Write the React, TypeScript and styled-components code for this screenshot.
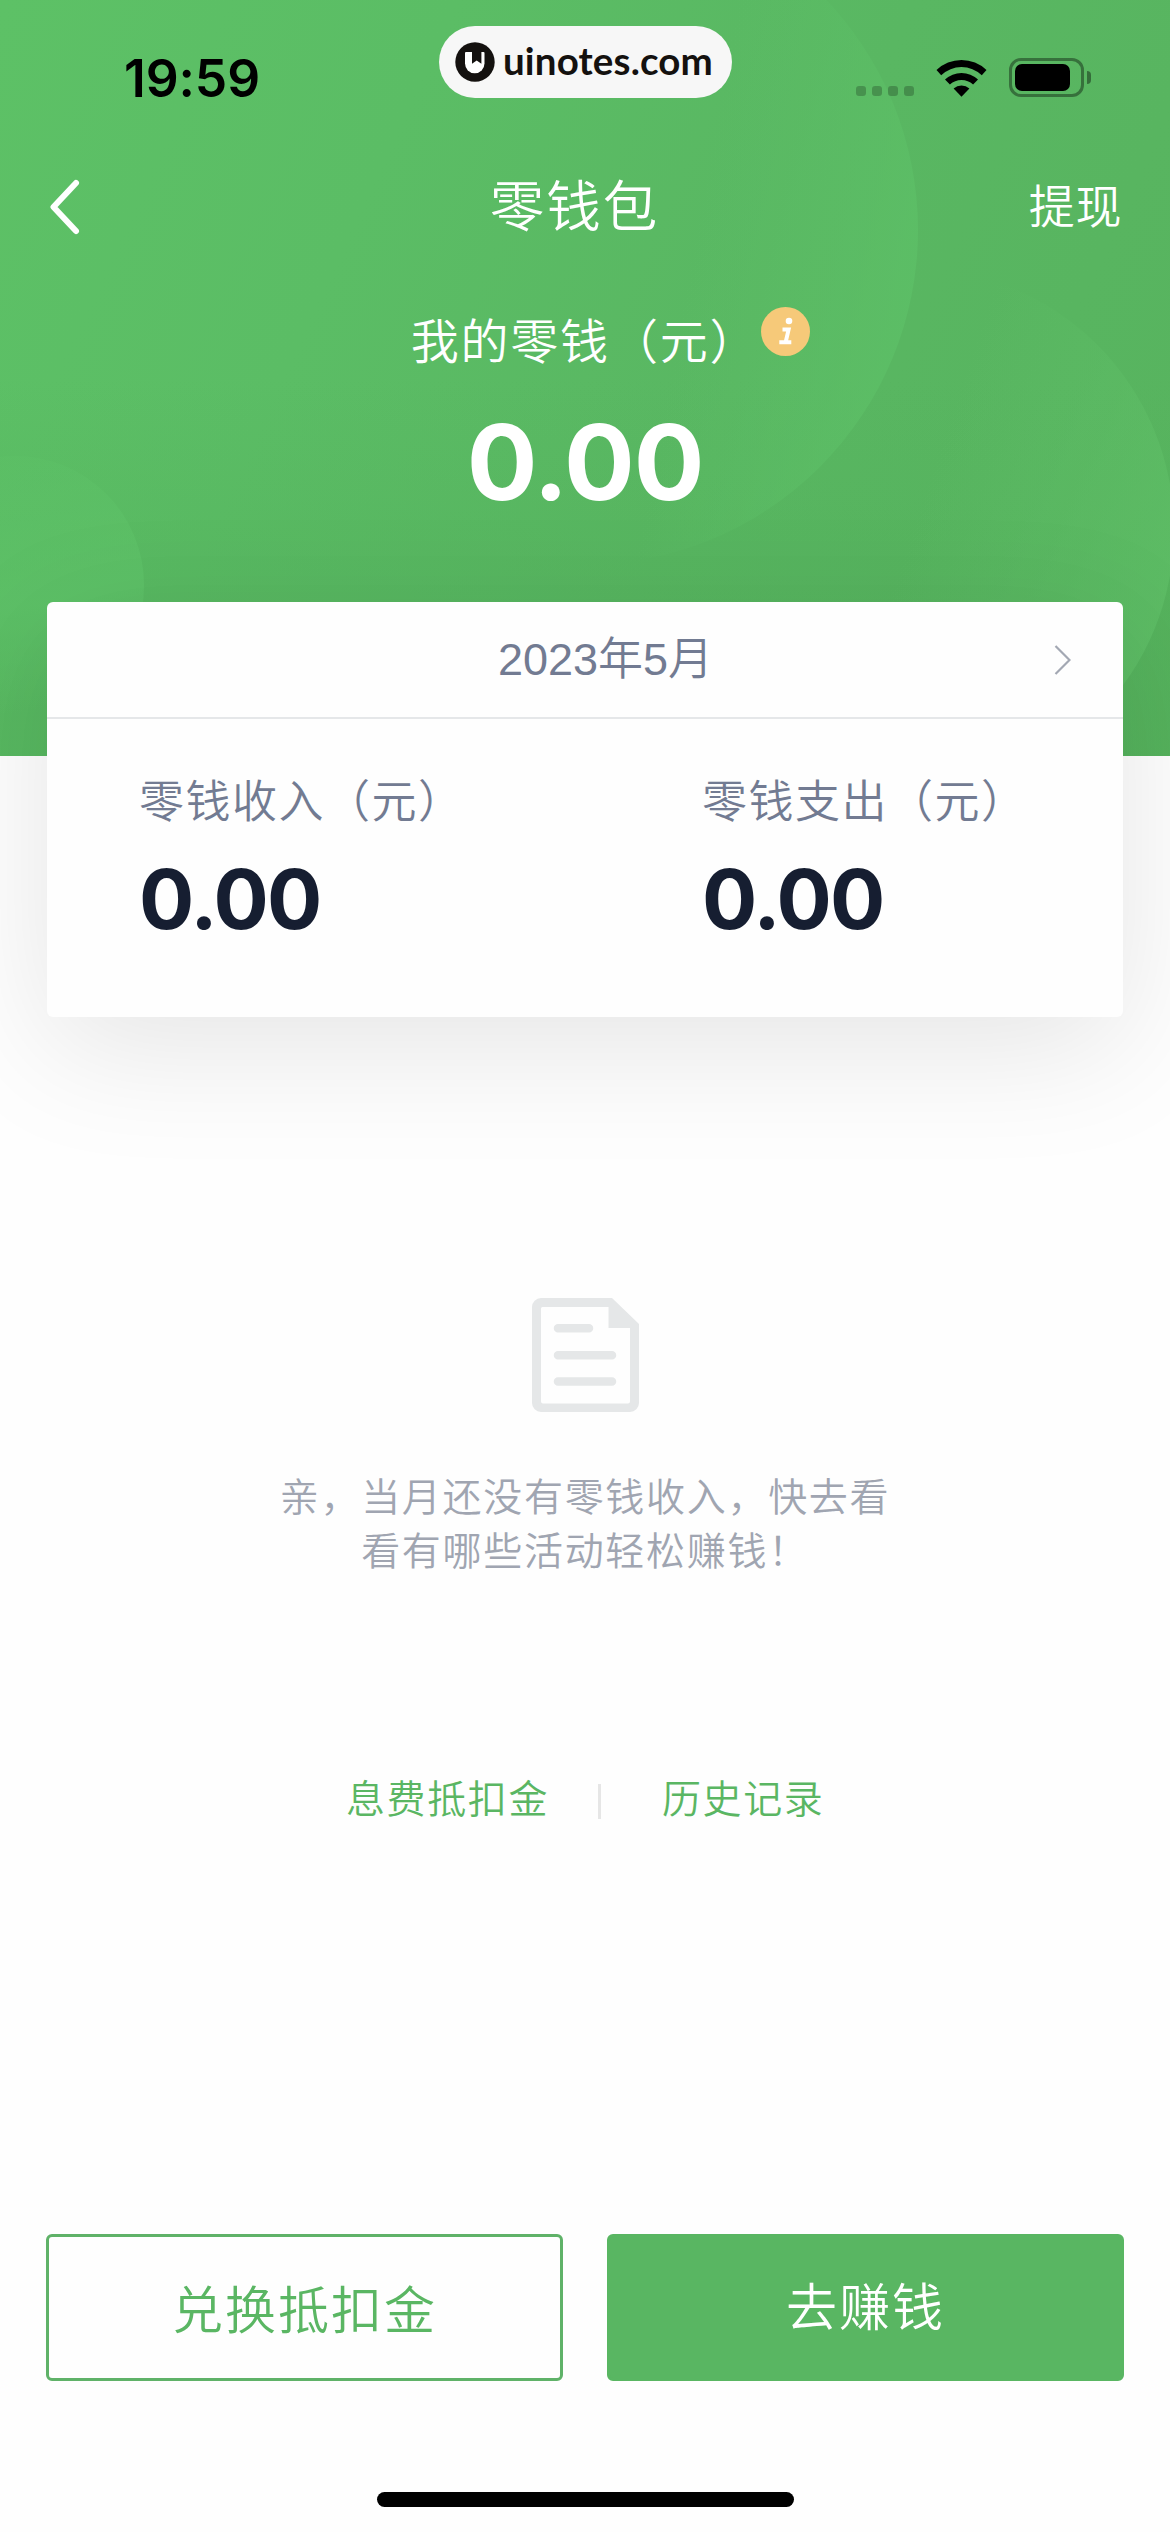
import React from "react";
import styled, { createGlobalStyle } from "styled-components";

const CJK = `"Noto Sans CJK SC", "Noto Sans", sans-serif`;
const GREEN = "#5ab663";

const GlobalStyle = createGlobalStyle`
  * { box-sizing: border-box; }
  body { margin: 0; background: #fefefe; }
`;

const Screen = styled.div`
  width: 1170px;
  height: 2532px;
  display: flex;
  flex-direction: column;
  background: #fefefe;
  font-family: ${CJK};
  font-weight: 350;
  overflow: hidden;
`;

const Hero = styled.header`
  position: relative;
  flex: none;
  height: 756px;
  display: flex;
  flex-direction: column;
  color: #fff;
  background: linear-gradient(115deg, #5dc166 0%, #5bbd65 30%, #59b762 60%, #57b35e 100%);
`;

const Backdrop = styled.svg`
  position: absolute;
  inset: 0;
`;

const StatusBar = styled.div`
  position: relative;
  height: 132px;
  display: grid;
  grid-template-columns: 439px 293px 1fr;
  align-items: start;
  padding-top: 26px;
`;

const Clock = styled.time`
  padding: 22px 0 0 124px;
  font: 600 51.5px/60px Inter, sans-serif;
  letter-spacing: -0.1px;
  color: #000;
`;

const Watermark = styled.div`
  height: 72px;
  display: flex;
  align-items: center;
  gap: 8px;
  padding-left: 16px;
  border-radius: 36px;
  background: #f7f7f7;
  color: #14110f;
`;

const Wordmark = styled.span`
  padding-bottom: 3px;
  font: 700 38.5px/57px Lato, sans-serif;
  letter-spacing: 0.15px;
`;

const StatusIcons = styled.div`
  display: flex;
  align-items: center;
  padding: 32px 0 0 124px;
`;

const SignalDots = styled.div`
  display: flex;
  gap: 6px;
  margin: 26px 22px 0 0;
`;

const Dot = styled.i`
  width: 10px;
  height: 10px;
  border-radius: 3px;
  background: rgba(0, 0, 0, 0.22);
`;

const Battery = styled.div`
  width: 75px;
  height: 39px;
  margin-left: 22px;
  padding: 3px;
  border: 3px solid rgba(0, 0, 0, 0.38);
  border-radius: 12px;
`;

const Charge = styled.div`
  width: 55px;
  height: 27px;
  border-radius: 7px;
  background: #000;
`;

const BatteryNub = styled.div`
  width: 4px;
  height: 13px;
  margin-left: 3px;
  border-radius: 0 4px 4px 0;
  background: rgba(0, 0, 0, 0.4);
`;

const NavBar = styled.nav`
  position: relative;
  height: 148px;
  display: flex;
  align-items: center;
  padding: 0 47px;
`;

const BackButton = styled.button`
  width: 74px;
  height: 60px;
  padding: 0;
  border: 0;
  background: none;
  display: flex;
  align-items: center;
`;

const NavTitle = styled.h1`
  flex: 1;
  margin: 0;
  padding-bottom: 6px;
  text-align: center;
  font-size: 54.5px;
  line-height: 80px;
  font-weight: 350;
  letter-spacing: 2px;
`;

const NavAction = styled.button`
  width: 95px;
  padding: 0 0 6px;
  border: 0;
  background: none;
  color: #fff;
  font: 350 46px/66px ${CJK};
  letter-spacing: 0.8px;
  white-space: nowrap;
`;

const Balance = styled.section`
  position: relative;
  display: flex;
  flex-direction: column;
  align-items: center;
`;

const BalanceLabel = styled.div`
  display: flex;
  align-items: flex-start;
  margin-top: 23px;
  height: 74px;
  font-size: 48px;
  line-height: 70px;
  letter-spacing: 1.8px;
`;

const InfoIcon = styled.svg`
  margin: 4px -51px 0 2px;
`;

const BalanceAmount = styled.strong`
  margin-top: 20px;
  font: 700 105px/130px Inter, sans-serif;
  letter-spacing: -1.2px;
`;

const Card = styled.section`
  position: relative;
  flex: none;
  width: 1076px;
  height: 415px;
  margin: -154px 0 0 47px;
  border-radius: 6px;
  background: #fefefe;
  box-shadow: 0 30px 130px rgba(0, 0, 0, 0.1);
`;

const MonthPicker = styled.div`
  height: 117px;
  display: flex;
  align-items: center;
  padding: 0 52px 0 110px;
  border-bottom: 2px solid #e5e7e9;
`;

const Month = styled.span`
  flex: 1;
  text-align: center;
  padding-top: 1px;
  color: #727b92;
  font: 350 45px/66px "Liberation Sans", ${CJK};
`;

const Totals = styled.div`
  display: grid;
  grid-template-columns: 563px 1fr;
  padding: 47px 0 0 92px;
`;

const TotalLabel = styled.div`
  color: #727b92;
  font-size: 45px;
  line-height: 66px;
  letter-spacing: 1.5px;
  white-space: nowrap;
`;

const TotalAmount = styled.div`
  margin-top: 18px;
  color: #161e31;
  font: 700 82px/100px Inter, sans-serif;
  letter-spacing: -1.7px;
`;

const EmptyState = styled.section`
  flex: none;
  display: flex;
  flex-direction: column;
  align-items: center;
  padding-top: 281px;
`;

const EmptyText = styled.p`
  margin: 55px 0 0;
  text-align: center;
  color: #a0a5b1;
  font-size: 39px;
  line-height: 54px;
  letter-spacing: 1.7px;
`;

const Links = styled.div`
  flex: none;
  height: 60px;
  display: flex;
  align-items: flex-start;
  padding-left: 346px;
  margin-top: 193px;
`;

const TextLink = styled.a`
  color: ${GREEN};
  font-size: 39px;
  line-height: 56px;
  letter-spacing: 1.6px;
`;

const Separator = styled.i`
  width: 3px;
  height: 35px;
  margin: 16px 61px 0 49px;
  background: #e6e6e6;
`;

const Actions = styled.footer`
  flex: none;
  display: flex;
  gap: 44px;
  padding: 0 46px;
  margin-top: 406px;
`;

const ActionButton = styled.button<{ $filled?: boolean }>`
  flex: 1;
  height: 147px;
  padding: ${(p) => (p.$filled ? "0 0 7px" : "0 0 1px")};
  border: 3px solid ${(p) => (p.$filled ? "#59b662" : "#5fb268")};
  border-radius: 6px;
  background: ${(p) => (p.$filled ? "#59b662" : "#fefefe")};
  color: ${(p) => (p.$filled ? "#fff" : GREEN)};
  font: 350 51px/74px ${CJK};
  letter-spacing: 2px;
`;

const HomeIndicator = styled.div`
  flex: none;
  width: 417px;
  height: 15px;
  margin: 111px auto 0;
  border-radius: 8px;
  background: #000;
`;

const HeroBackdrop = () => (
  <Backdrop width="1170" height="756" viewBox="0 0 1170 756">
    <defs>
      <linearGradient id="shade" x1="0" y1="0" x2="0" y2="1">
        <stop offset="0.5" stopColor="#52b05a" stopOpacity="0" />
        <stop offset="0.85" stopColor="#52b05a" stopOpacity="0.45" />
      </linearGradient>
      <linearGradient id="glowMain" x1="0.45" y1="0.45" x2="1" y2="0.55">
        <stop offset="0.4" stopColor="#5dc067" stopOpacity="0" />
        <stop offset="1" stopColor="#5dc067" stopOpacity="0.75" />
      </linearGradient>
      <linearGradient id="glowRight" x1="0.4" y1="0.4" x2="1" y2="0.6">
        <stop offset="0.2" stopColor="#60c068" stopOpacity="0" />
        <stop offset="1" stopColor="#60c068" stopOpacity="0.65" />
      </linearGradient>
      <linearGradient id="glowLeft" x1="0.3" y1="0" x2="0.5" y2="1">
        <stop offset="0" stopColor="#5ec268" stopOpacity="0.25" />
        <stop offset="0.6" stopColor="#5ec268" stopOpacity="0.75" />
        <stop offset="1" stopColor="#5ec268" stopOpacity="0" />
      </linearGradient>
    </defs>
    <rect width="1170" height="756" fill="url(#shade)" />
    <circle cx="583" cy="230" r="335" fill="url(#glowMain)" />
    <circle cx="912" cy="530" r="262" fill="url(#glowRight)" />
    <circle cx="15" cy="585" r="129" fill="url(#glowLeft)" />
  </Backdrop>
);

const BrandMark = () => (
  <svg width="40" height="40" viewBox="0 0 40 40">
    <circle cx="20" cy="20" r="19.7" fill="#14110f" />
    <path
      d="M11 10H28.500a1 1 0 0 1 1 1V21.500a9.750 9.750 0 0 1-19.500 0V11a1 1 0 0 1 1-1z"
      fill="#fff"
    />
    <path d="M17 9V21.800L21.700 18.600L26.400 21.800V9z" fill="#14110f" />
  </svg>
);

const Wifi = () => (
  <svg width="51" height="38" viewBox="0 0 51 38">
    <path d="M0.5 11a36 36 0 0 1 50 0l-4.7 5.2a29.5 29.5 0 0 0-40.6 0z" />
    <path d="M9 20.500a24 24 0 0 1 33 0l-4.9 5a17 17 0 0 0-23.2 0z" />
    <path d="M17.6 29.500a12 12 0 0 1 15.8 0l-7.9 8.2z" />
  </svg>
);

const EmptyDocument = () => (
  <svg width="107" height="114" viewBox="0 0 107 114">
    <path
      d="M9 0H80L107 26V105a9 9 0 0 1-9 9H9a9 9 0 0 1-9-9V9a9 9 0 0 1 9-9zM9 10.5V103.500a2 2 0 0 0 2 2H96a2 2 0 0 0 2-2V30H76.500V9H10.500a1.500 1.500 0 0 0-1.500 1.500z"
      fill="#e5e7e8"
      fillRule="evenodd"
    />
    <g stroke="#e5e7e8" strokeWidth="8.500" strokeLinecap="round">
      <path d="M26 30.300H57M26 57.300H80M26 83.600H80" />
    </g>
  </svg>
);

const totals = [
  { label: "零钱收入（元）", amount: "0.00" },
  { label: "零钱支出（元）", amount: "0.00" },
];

export default function App() {
  return (
    <Screen>
      <GlobalStyle />
      <Hero>
        <HeroBackdrop />
        <StatusBar>
          <Clock>19:59</Clock>
          <Watermark>
            <BrandMark />
            <Wordmark>uinotes.com</Wordmark>
          </Watermark>
          <StatusIcons>
            <SignalDots>
              <Dot />
              <Dot />
              <Dot />
              <Dot />
            </SignalDots>
            <Wifi />
            <Battery>
              <Charge />
            </Battery>
            <BatteryNub />
          </StatusIcons>
        </StatusBar>
        <NavBar>
          <BackButton aria-label="返回">
            <svg width="36" height="60" viewBox="0 0 36 60" fill="none">
              <path
                d="M29 7L6.500 31L29 55"
                stroke="#fff"
                strokeWidth="6"
                strokeLinecap="round"
                strokeLinejoin="round"
              />
            </svg>
          </BackButton>
          <NavTitle>零钱包</NavTitle>
          <NavAction>提现</NavAction>
        </NavBar>
        <Balance>
          <BalanceLabel>
            我的零钱（元）
            <InfoIcon width="49" height="49" viewBox="0 0 49 49">
              <circle cx="24.5" cy="24.5" r="24.5" fill="#f6c979" />
              <circle cx="28" cy="14" r="3.300" fill="#fff" />
              <path
                d="M21.500 22.600H27.600L24.700 35M18.300 35.300H30.300"
                stroke="#fff"
                strokeWidth="4"
                fill="none"
              />
            </InfoIcon>
          </BalanceLabel>
          <BalanceAmount>0.00</BalanceAmount>
        </Balance>
      </Hero>
      <Card>
        <MonthPicker>
          <Month>2023年5月</Month>
          <svg width="17" height="30" viewBox="0 0 17 30" fill="none">
            <path d="M1.500 1L15.500 15L1.500 29" stroke="#a3a8b3" strokeWidth="2.200" />
          </svg>
        </MonthPicker>
        <Totals>
          {totals.map((t) => (
            <div key={t.label}>
              <TotalLabel>{t.label}</TotalLabel>
              <TotalAmount>{t.amount}</TotalAmount>
            </div>
          ))}
        </Totals>
      </Card>
      <EmptyState>
        <EmptyDocument />
        <EmptyText>
          亲，当月还没有零钱收入，快去看
          <br />
          看有哪些活动轻松赚钱！
        </EmptyText>
      </EmptyState>
      <Links>
        <TextLink>息费抵扣金</TextLink>
        <Separator />
        <TextLink>历史记录</TextLink>
      </Links>
      <Actions>
        <ActionButton>兑换抵扣金</ActionButton>
        <ActionButton $filled>去赚钱</ActionButton>
      </Actions>
      <HomeIndicator />
    </Screen>
  );
}
